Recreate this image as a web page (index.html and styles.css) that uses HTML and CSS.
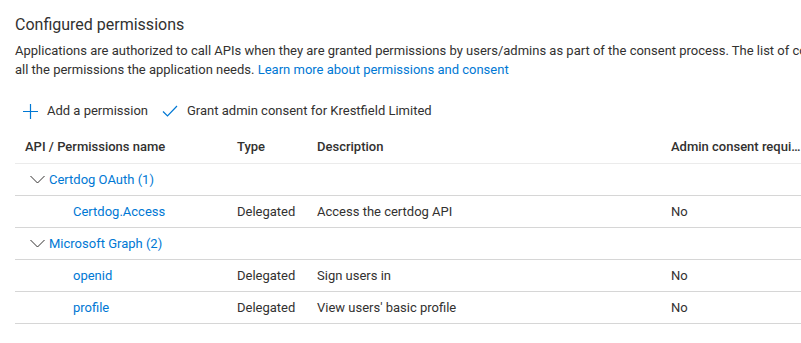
FILE: index.html
```html
<!DOCTYPE html>
<html lang="en">
<head>
    <meta charset="UTF-8">
    <meta name="viewport" content="width=device-width, initial-scale=1.0">
    <title>Configured permissions</title>
    <link rel="stylesheet" href="styles.css">
</head>
<body>
    <div class="page">
        <h2 class="title">Configured permissions</h2>
        <p class="intro">
            Applications are authorized to call APIs when they are granted permissions by users/admins as part of the consent process. The list of configured permissions should include<br>
            all the permissions the application needs. <a href="#">Learn more about permissions and consent</a>
        </p>

        <div class="toolbar">
            <button class="tool">
                <svg width="15" height="15" viewBox="0 0 15 15"><path d="M7.5 0V15M0 7.5H15" stroke="#0078d4" stroke-width="1.2" fill="none"/></svg>
                Add a permission
            </button>
            <button class="tool">
                <svg width="16" height="12" viewBox="0 0 16 12"><path d="M1 6.5L5.5 11L15 1" stroke="#0078d4" stroke-width="1.2" fill="none"/></svg>
                Grant admin consent for Krestfield Limited
            </button>
        </div>

        <div class="grid">
            <div class="row head">
                <div class="cell">API / Permissions name</div>
                <div class="cell">Type</div>
                <div class="cell">Description</div>
                <div class="cell">Admin consent required</div>
            </div>

            <div class="row group">
                <div class="cell name">
                    <svg class="chev" width="15" height="15" viewBox="0 0 15 15"><path d="M0.5 4L7.5 11L14.5 4" stroke="#323130" stroke-width="1" fill="none"/></svg>
                    <a href="#">Certdog OAuth (1)</a>
                </div>
            </div>
            <div class="row">
                <div class="cell perm"><a href="#">Certdog.Access</a></div>
                <div class="cell">Delegated</div>
                <div class="cell">Access the certdog API</div>
                <div class="cell">No</div>
            </div>

            <div class="row group">
                <div class="cell name">
                    <svg class="chev" width="15" height="15" viewBox="0 0 15 15"><path d="M0.5 4L7.5 11L14.5 4" stroke="#323130" stroke-width="1" fill="none"/></svg>
                    <a href="#">Microsoft Graph (2)</a>
                </div>
            </div>
            <div class="row">
                <div class="cell perm"><a href="#">openid</a></div>
                <div class="cell">Delegated</div>
                <div class="cell">Sign users in</div>
                <div class="cell">No</div>
            </div>
            <div class="row">
                <div class="cell perm"><a href="#">profile</a></div>
                <div class="cell">Delegated</div>
                <div class="cell">View users' basic profile</div>
                <div class="cell">No</div>
            </div>
        </div>
    </div>
</body>
</html>
```
FILE: styles.css
```css
body {
    margin: 0;
    background-color: white;
    color: #323130;
    font-family: Roboto, "Liberation Sans", sans-serif;
    font-size: 13px;
    overflow: hidden;
}

a {
    color: #0078d4;
    text-decoration: none;
}

.page {
    padding: 15px 0 0 15px;
    width: 1200px;
}

.title {
    margin: 0 0 6px;
    font-size: 16px;
    font-weight: 400;
    line-height: 20px;
}

.intro {
    margin: 0;
    line-height: 19px;
    white-space: nowrap;
}

.toolbar {
    display: flex;
    gap: 6px;
    height: 32px;
    margin: 16px 0 4px;
}

.tool {
    display: flex;
    align-items: center;
    gap: 9px;
    padding: 0 0 0 8px;
    border: none;
    background: none;
    color: #323130;
    font-family: inherit;
    font-size: 13px;
    line-height: 32px;
    cursor: pointer;
}

.grid {
    width: 786px;
}

.row {
    display: grid;
    grid-template-columns: 212px 80px 354px 140px;
    height: 31px;
    line-height: 31px;
    border-bottom: 1px solid #d6d6d6;
}

.row.head {
    height: 32px;
    line-height: 32px;
    font-weight: 500;
    border-bottom-color: #ebebeb;
}

.cell {
    padding-left: 10px;
    white-space: nowrap;
    overflow: hidden;
    text-overflow: ellipsis;
}

.group .name {
    grid-column: 1 / -1;
    display: flex;
    align-items: center;
    gap: 4px;
    padding-left: 15px;
}

.perm {
    padding-left: 58px;
}
```
